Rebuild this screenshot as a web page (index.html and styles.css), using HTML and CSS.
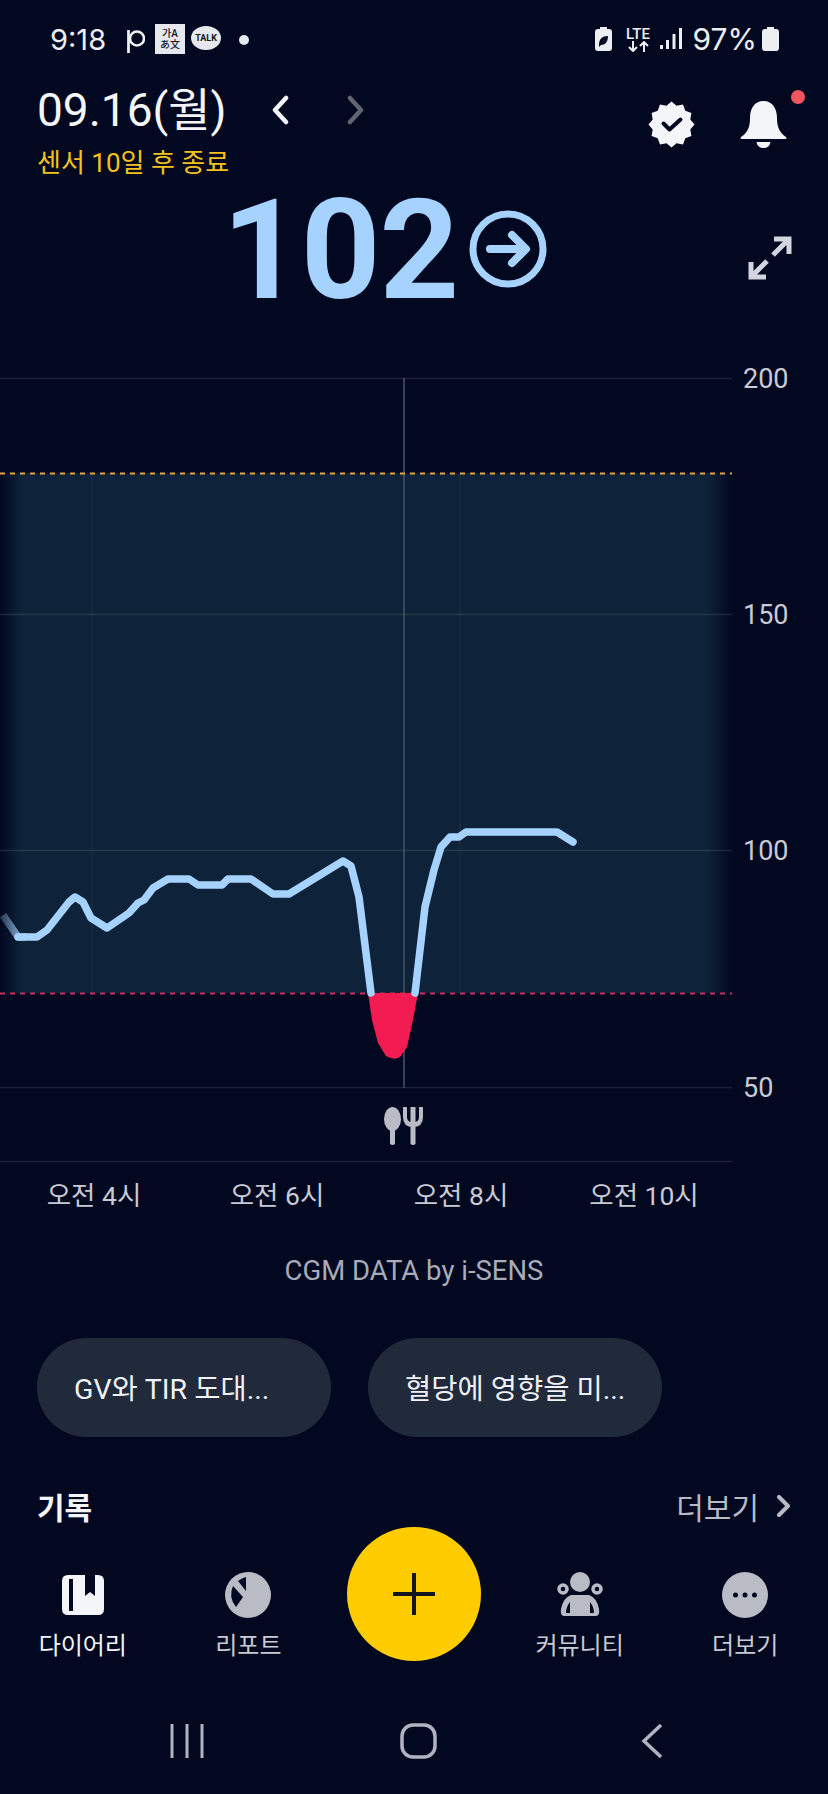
FILE: index.html
```html
<!DOCTYPE html>
<html lang="ko">
<head>
    <meta charset="UTF-8">
    <meta name="viewport" content="width=device-width, initial-scale=1.0">
    <title>CGM</title>
    <link rel="stylesheet" href="styles.css">
</head>
<body>
    <div class="screen">
        <!-- status bar -->
        <div class="status">
            <span class="status-time">9:18</span>
            <svg class="st-p" width="18" height="23" viewBox="0 0 18 23"><circle cx="10" cy="8.500" r="7" fill="none" stroke="#eceef2" stroke-width="2.600"/><path d="M1.500 0v23" stroke="#eceef2" stroke-width="2.800"/></svg>
            <div class="st-translate"><span>가A</span><span>あ文</span></div>
            <div class="st-talk"><span>TALK</span></div>
            <span class="st-dot"></span>
            <div class="status-right">
                <svg width="17" height="24" viewBox="0 0 17 24"><path d="M5 0h7v2h2q3 0 3 3v16q0 3-3 3H3q-3 0-3-3V5q0-3 3-3h2z" fill="#eceef2"/><path d="M4 18c0-6 3-9 9-9 0 6-3 9-7 9l-2 2z" fill="#020820"/></svg>
                <div class="st-lte"><span>LTE</span><svg width="25" height="11" viewBox="0 0 25 11"><path d="M7 0v10M3 6l4 4 4-4M18 11V1M14 5l4-4 4 4" fill="none" stroke="#eceef2" stroke-width="2"/></svg></div>
                <svg class="st-signal" width="22" height="22" viewBox="0 0 22 22"><path d="M0 17h3v4H0zM6 12h3v9H6zM12.500 6h3v15h-3zM19 0h3v21h-3z" fill="#eceef2"/></svg>
                <span class="status-pct">97%</span>
                <svg width="17" height="24" viewBox="0 0 17 24"><path d="M5 0h7v2h2q3 0 3 3v16q0 3-3 3H3q-3 0-3-3V5q0-3 3-3h2z" fill="#eceef2"/></svg>
            </div>
        </div>

        <!-- date + actions -->
        <div class="head">
            <div class="date-row">
                <h1 class="date">09.16(월)</h1>
                <svg class="chev-prev" width="19" height="30" viewBox="0 0 19 30"><path d="M15 3 4 15l11 12" fill="none" stroke="#f4f5f8" stroke-width="4.500" stroke-linecap="round" stroke-linejoin="round"/></svg>
                <svg class="chev-next" width="19" height="30" viewBox="0 0 19 30"><path d="M4 3l11 12L4 27" fill="none" stroke="#62656f" stroke-width="4.500" stroke-linecap="round" stroke-linejoin="round"/></svg>
                <div class="head-actions">
                    <svg width="47" height="47" viewBox="-23.500 -23.500 47 47"><polygon fill="#f4f5f8" points="0,-23 5,-18.800 11.500,-19.900 13.800,-13.800 19.900,-11.500 18.800,-5 23,0 18.800,5 19.900,11.500 13.800,13.800 11.500,19.900 5,18.800 0,23 -5,18.800 -11.500,19.900 -13.800,13.800 -19.900,11.500 -18.800,5 -23,0 -18.800,-5 -19.900,-11.500 -13.800,-13.800 -11.500,-19.900 -5,-18.800"/><path d="M-8-1l6 6L9-5" fill="none" stroke="#020820" stroke-width="4" stroke-linecap="round" stroke-linejoin="round"/></svg>
                    <div class="bell">
                        <svg width="47" height="47" viewBox="0 0 47 47"><path d="M23.500 0C33 0 37 8 37 17c0 10 3 15 9 19q1.500 2-1 2H2q-2.500 0-1-2c6-4 9-9 9-19C10 8 14 0 23.500 0z" fill="#f4f5f8"/><path d="M16.500 41h14q-1 6-7 6t-7-6z" fill="#f4f5f8"/></svg>
                        <span class="bell-dot"></span>
                    </div>
                </div>
            </div>
            <p class="sensor">센서 10일 후 종료</p>
        </div>

        <!-- current value -->
        <div class="value-row">
            <span class="value">102</span>
            <svg class="value-arrow" width="78" height="78" viewBox="0 0 78 78"><circle cx="39" cy="39" r="35" fill="none" stroke="#a6d2ff" stroke-width="7"/><path d="M21 39h34M43 25l14 14-14 14" fill="none" stroke="#a6d2ff" stroke-width="8" stroke-linecap="round" stroke-linejoin="round"/></svg>
            <svg class="expand" width="44" height="44" viewBox="0 0 44 44"><path d="M26 3h15v15M39 5 25 19M18 41H3V26M5 39l14-14" fill="none" stroke="#d3d5de" stroke-width="5"/></svg>
        </div>

        <!-- chart -->
        <svg class="chart" width="828" height="920" viewBox="0 308 828 920">
            <defs>
                <linearGradient id="bandFade" gradientUnits="userSpaceOnUse" x1="0" y1="0" x2="732" y2="0">
                    <stop offset="0" stop-color="#0e2339" stop-opacity="0"/>
                    <stop offset="0.03" stop-color="#0e2339"/>
                    <stop offset="0.965" stop-color="#0e2339"/>
                    <stop offset="1" stop-color="#0e2339" stop-opacity="0"/>
                </linearGradient>
                <linearGradient id="lineFade" gradientUnits="userSpaceOnUse" x1="0" y1="0" x2="30" y2="0">
                    <stop offset="0" stop-color="#a6d2ff" stop-opacity="0.2"/>
                    <stop offset="1" stop-color="#a6d2ff"/>
                </linearGradient>
            </defs>
            <rect x="0" y="473" width="732" height="520" fill="url(#bandFade)"/>
            <path class="grid-h" d="M0 378.500H732M0 614.500H732M0 850.500H732M0 1087.500H732M0 1161.500H732"/>
            <path class="grid-v" d="M92 473V993M460 473V993"/>
            <path class="now-line" d="M404 378V1088"/>
            <path class="limit-high" d="M0 473.500H732"/>
            <path class="limit-low" d="M0 993.500H732"/>
            <path class="low-area" d="M368 993 372 1020 378 1043 386 1056q9 5 14 1L407 1047 413 1020 418 993z"/>
            <path class="curve-lead" d="M3 915 18 937H26"/>
            <polyline class="curve" points="18,937 37,937 47,930 69,902 75,897 83,902 91,918 107,928 129,913 138,903 144,900 153,888 168,879 189,879 198,885 222,885 228,879 251,879 273,894 289,894 343,861 351,866 359,897 371,993"/>
            <polyline class="curve" points="415,993 425,907 434,870 441,847 450,837 459,837 466,832 557,832 573,842"/>
            <g class="y-labels">
                <text x="743" y="388">200</text>
                <text x="743" y="624">150</text>
                <text x="743" y="860">100</text>
                <text x="743" y="1097">50</text>
            </g>
            <g class="meal">
                <ellipse cx="392.500" cy="1119" rx="8.500" ry="12"/>
                <path d="M390 1120h5v24q-2.500 2-5 0z"/>
                <path d="M410.500 1125v19q2.500 2 5 0v-19zM403 1107v10q0 10 10 10t10-10v-10h-4v10q0 4-3.500 5v-15h-5v15q-3.500-1-3.500-5v-10z"/>
            </g>
            <g class="x-labels">
                <text x="94" y="1205">오전 4시</text>
                <text x="277" y="1205">오전 6시</text>
                <text x="461" y="1205">오전 8시</text>
                <text x="644" y="1205">오전 10시</text>
            </g>
        </svg>

        <p class="credit">CGM DATA by i-SENS</p>

        <div class="chips">
            <div class="chip">GV와 TIR 도대...</div>
            <div class="chip">혈당에 영향을 미...</div>
        </div>

        <div class="section-head">
            <h2 class="section-title">기록</h2>
            <div class="more-link">
                <span>더보기</span>
                <svg width="15" height="22" viewBox="0 0 15 22"><path d="M3 2l9 9-9 9" fill="none" stroke="#b8bac6" stroke-width="4" stroke-linecap="round" stroke-linejoin="round"/></svg>
            </div>
        </div>

        <!-- bottom tabs -->
        <div class="tabs">
            <div class="tab tab-active">
                <svg width="42" height="46" viewBox="0 0 42 46"><path d="M6 3h30q6 0 6 6v28q0 6-6 6H6q-6 0-6-6V9q0-6 6-6z" fill="#f4f5f8"/><path d="M7 7h4v32H7zM23 3h10v21l-5-4-5 4z" fill="#020820"/></svg>
                <span>다이어리</span>
            </div>
            <div class="tab">
                <svg width="46" height="46" viewBox="0 0 46 46"><circle cx="23" cy="23" r="23" fill="#b9bbc5"/><path d="M21 5v14L13 9q4-3 8-4zM8 14l10 11-7 10Q3 25 8 14z" fill="#020820"/></svg>
                <span>리포트</span>
            </div>
            <div class="tab-add">
                <div class="fab"><svg width="42" height="42" viewBox="0 0 42 42"><path d="M21 1v40M1 21h40" fill="none" stroke="#14141c" stroke-width="4" stroke-linecap="round"/></svg></div>
            </div>
            <div class="tab">
                <svg width="46" height="46" viewBox="0 0 46 46"><circle cx="23" cy="10" r="10" fill="#b9bbc5"/><circle cx="6" cy="17" r="4" fill="none" stroke="#b9bbc5" stroke-width="3.500"/><circle cx="40" cy="17" r="4" fill="none" stroke="#b9bbc5" stroke-width="3.500"/><path d="M14 23h18q8 3 10 14 1 7-3 7H7q-4 0-3-7 2-11 10-14z" fill="#b9bbc5"/><path d="M9 41q0-6 4-11v11zM37 41q0-6-4-11v11z" fill="#020820"/></svg>
                <span>커뮤니티</span>
            </div>
            <div class="tab">
                <svg width="46" height="46" viewBox="0 0 46 46"><circle cx="23" cy="23" r="23" fill="#b9bbc5"/><circle cx="13.500" cy="23" r="2.500" fill="#020820"/><circle cx="23" cy="23" r="2.500" fill="#020820"/><circle cx="32.500" cy="23" r="2.500" fill="#020820"/></svg>
                <span>더보기</span>
            </div>
        </div>

        <!-- android nav -->
        <div class="navbar">
            <svg width="34" height="36" viewBox="0 0 34 36"><path d="M2 1v34M17 1v34M32 1v34" stroke="#b0b3c0" stroke-width="3"/></svg>
            <svg width="37" height="36" viewBox="0 0 37 36"><rect x="2" y="2" width="33" height="32" rx="11" fill="none" stroke="#b0b3c0" stroke-width="3.500"/></svg>
            <svg class="nav-back" width="22" height="36" viewBox="0 0 22 36"><path d="M20 2 3 18l17 16" fill="none" stroke="#b0b3c0" stroke-width="3.500"/></svg>
        </div>
    </div>
</body>
</html>
```

FILE: styles.css
```css
body {
    margin: 0;
    background-color: #020820;
    font-family: Roboto, 'Noto Sans CJK KR', sans-serif;
}
h1, h2, p {
    margin: 0;
    font-weight: 400;
}
svg {
    display: block;
    flex: none;
}
.screen {
    width: 828px;
    height: 1794px;
    overflow: hidden;
    display: flex;
    flex-direction: column;
    color: #f4f5f8;
}

/* status bar */
.status {
    height: 78px;
    display: flex;
    align-items: center;
    padding: 0 49px 0 50px;
    color: #eceef2;
    font-family: Inter, Roboto, sans-serif;
    font-size: 29px;
}
.status-time {
    width: 77px;
}
.st-p {
    margin-top: 4px;
}
.st-translate {
    width: 30px;
    height: 30px;
    margin-left: 10px;
    background-color: #e6e8ee;
    color: #14141c;
    font-family: Roboto, 'Noto Sans CJK KR', sans-serif;
    font-size: 10px;
    line-height: 11px;
    font-weight: 500;
    display: flex;
    flex-direction: column;
    align-items: center;
    justify-content: center;
}
.st-talk {
    width: 30px;
    height: 24px;
    margin-left: 6px;
    margin-top: -2px;
    border-radius: 50%;
    background-color: #e6e8ee;
    color: #14141c;
    font-family: Roboto, sans-serif;
    font-size: 9px;
    font-weight: 700;
    display: flex;
    align-items: center;
    justify-content: center;
}
.st-dot {
    width: 10px;
    height: 10px;
    margin-left: 18px;
    margin-top: 2px;
    border-radius: 50%;
    background-color: #e6e8ee;
}
.status-right {
    margin-left: auto;
    display: flex;
    align-items: center;
}
.st-lte {
    margin-left: 14px;
    width: 25px;
    font-family: Roboto, sans-serif;
    font-size: 15px;
    font-weight: 500;
    line-height: 14px;
    text-align: center;
}
.st-signal {
    margin-left: 9px;
}
.status-pct {
    margin-left: 11px;
    margin-right: 5px;
    font-size: 30px;
}

/* header */
.head {
    height: 106px;
    padding: 0 41px 0 37px;
}
.date-row {
    height: 64px;
    display: flex;
    align-items: center;
}
.date {
    width: 234px;
    font-size: 46px;
    line-height: 64px;
    white-space: nowrap;
}
.chev-next {
    margin-left: 56px;
}
.head-actions {
    margin-left: auto;
    margin-top: 28px;
    display: flex;
    gap: 45px;
}
.bell {
    position: relative;
}
.bell-dot {
    position: absolute;
    top: -11px;
    right: -18px;
    width: 14px;
    height: 14px;
    border-radius: 50%;
    background-color: #f25560;
}
.sensor {
    color: #f5c21d;
    font-size: 26px;
    line-height: 42px;
}

/* big number */
.value-row {
    height: 124px;
    display: flex;
    align-items: center;
    padding: 10px 36px 0 222px;
    box-sizing: border-box;
}
.value {
    width: 247px;
    color: #a6d2ff;
    font-size: 139px;
    font-weight: 700;
    line-height: 124px;
    letter-spacing: -1px;
}
.value-arrow {
    margin-top: -4px;
}
.expand {
    margin-left: auto;
    margin-top: 14px;
}

/* chart */
.grid-h {
    fill: none;
    stroke: rgba(255, 255, 255, 0.1);
    stroke-width: 1.500;
}
.grid-v {
    fill: none;
    stroke: rgba(255, 255, 255, 0.04);
    stroke-width: 1.500;
}
.now-line {
    fill: none;
    stroke: #4a5566;
    stroke-width: 1.500;
}
.limit-high, .limit-low {
    fill: none;
    stroke-width: 2;
    stroke-dasharray: 5 5;
}
.limit-high {
    stroke: #e8a33c;
}
.limit-low {
    stroke: #c8315f;
}
.low-area {
    fill: #f21c52;
}
.curve {
    fill: none;
    stroke: #a6d2ff;
    stroke-width: 7.500;
    stroke-linejoin: round;
    stroke-linecap: round;
}
.curve-lead {
    fill: none;
    stroke: url(#lineFade);
    stroke-width: 7.500;
    stroke-linejoin: round;
}
.y-labels text {
    fill: #c8cad4;
    font-size: 27px;
}
.meal {
    fill: #b9bbc5;
}
.x-labels text {
    fill: #c8cad4;
    font-size: 26.500px;
    text-anchor: middle;
}

.credit {
    height: 110px;
    box-sizing: border-box;
    padding-top: 28px;
    color: #a8abb8;
    font-size: 27.500px;
    line-height: 30px;
    text-align: center;
}

.chips {
    display: flex;
    gap: 37px;
    padding: 0 37px;
}
.chip {
    width: 294px;
    height: 99px;
    box-sizing: border-box;
    padding-left: 37px;
    border-radius: 50px;
    background-color: #202a3a;
    color: #f0f1f5;
    font-size: 28.500px;
    line-height: 103px;
    white-space: nowrap;
}

.section-head {
    height: 90px;
    box-sizing: border-box;
    padding: 48px 37px 0;
    display: flex;
    justify-content: space-between;
    align-items: center;
}
.section-title {
    font-size: 30px;
    font-weight: 700;
}
.more-link {
    display: flex;
    align-items: center;
    gap: 17px;
    color: #b8bac6;
    font-size: 30px;
}

/* tabs */
.tabs {
    height: 153px;
    display: grid;
    grid-template-columns: repeat(5, 1fr);
}
.tab {
    padding-top: 45px;
    display: flex;
    flex-direction: column;
    align-items: center;
    gap: 13px;
    color: #c8cad4;
    font-size: 24px;
    line-height: 30px;
}
.tab-active {
    color: #f4f5f8;
}
.tab-add {
    display: flex;
    justify-content: center;
}
.fab {
    width: 134px;
    height: 134px;
    border-radius: 50%;
    background-color: #ffcc00;
    display: flex;
    align-items: center;
    justify-content: center;
}

.navbar {
    height: 114px;
    padding: 43px 0 0 170px;
    box-sizing: border-box;
    display: flex;
    align-items: flex-start;
    gap: 196px;
}
.nav-back {
    margin-left: 8px;
}
```
